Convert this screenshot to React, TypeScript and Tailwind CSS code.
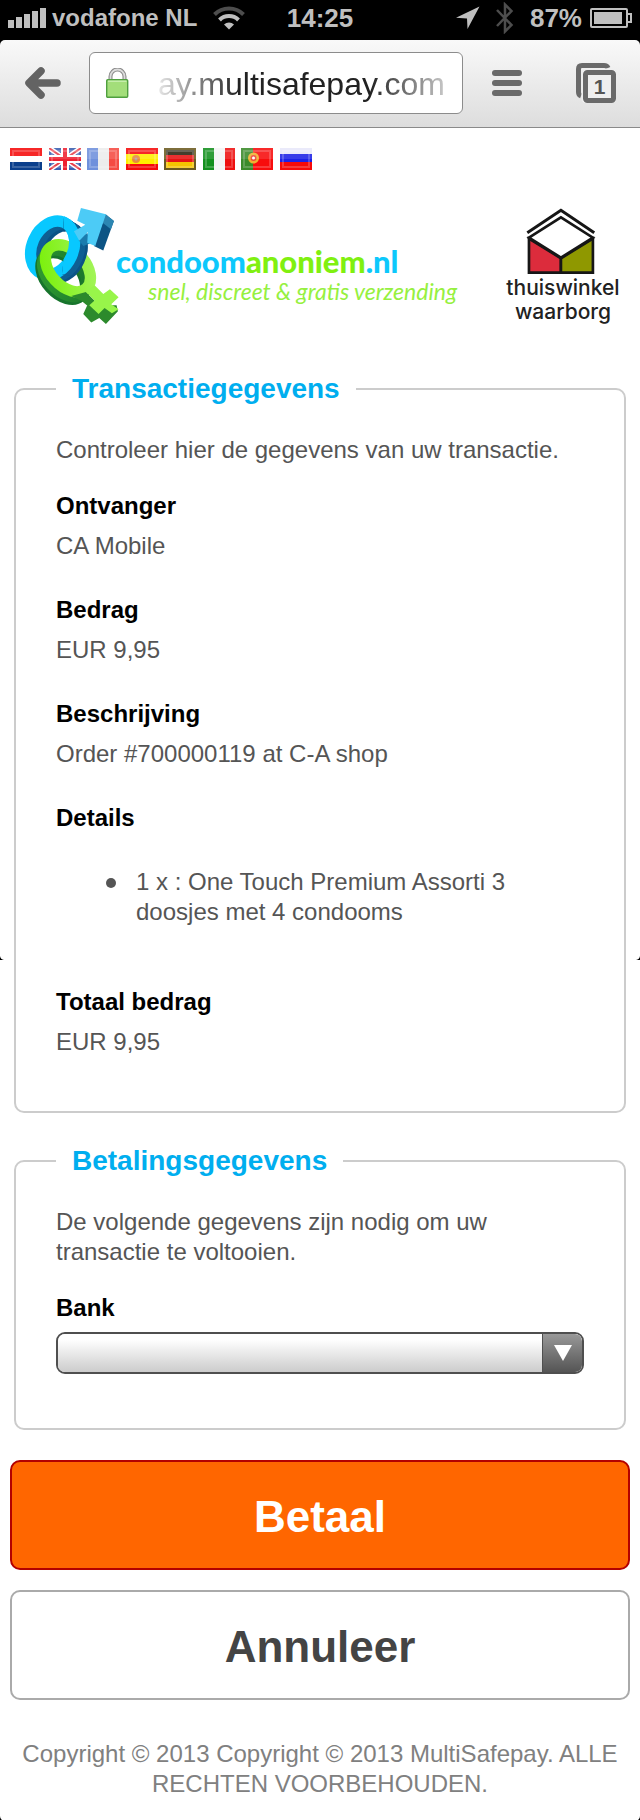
import type { ReactNode } from "react";

const details = [
  { label: "Ontvanger", value: "CA Mobile" },
  { label: "Bedrag", value: "EUR 9,95" },
  { label: "Beschrijving", value: "Order #700000119 at C-A shop" },
];

function SignalIcon() {
  return (
    <svg width="38" height="20" viewBox="0 0 38 20" fill="#bfbfbf" aria-hidden="true">
      <rect x="0" y="12" width="6" height="8" />
      <rect x="8" y="9" width="6" height="11" />
      <rect x="16" y="6" width="6" height="14" />
      <rect x="24" y="3" width="6" height="17" />
      <rect x="32" y="0" width="6" height="20" />
    </svg>
  );
}

function WifiIcon() {
  return (
    <svg width="32" height="24" viewBox="0 0 32 24" fill="none" aria-hidden="true">
      <path d="M1.5 8.5 A20.5 20.5 0 0 1 30.5 8.5" stroke="#4d4d4d" strokeWidth="4" />
      <path d="M6.5 14 A13.5 13.5 0 0 1 25.5 14" stroke="#bfbfbf" strokeWidth="4" />
      <path d="M16 23.5 L11 18.500 A7.500 7.500 0 0 1 21 18.500 Z" fill="#bfbfbf" />
    </svg>
  );
}

function StatusBar() {
  return (
    <div className="grid h-10 grid-cols-[1fr_auto_1fr] items-center bg-black px-2 pb-1 text-[26px] leading-8 font-bold text-[#bfbfbf]">
      <div className="flex items-center gap-[6px]">
        <SignalIcon />
        <span className="text-2xl whitespace-nowrap">vodafone NL</span>
        <span className="pl-[10px]">
          <WifiIcon />
        </span>
      </div>
      <span>14:25</span>
      <div className="flex items-center justify-end gap-2">
        <svg width="24" height="24" viewBox="0 0 24 24" fill="#bfbfbf" className="mr-2" aria-hidden="true">
          <path d="M23.5 0.5 L11.5 23 L11 12.500 L0 11.800 Z" />
        </svg>
        <svg width="18" height="32" viewBox="0 0 18 32" fill="none" stroke="#4d4d4d" strokeWidth="2.500" className="mr-2" aria-hidden="true">
          <path d="M1 8 L15.5 23 L9 29.500 V2.500 L15.500 9 L1 24" />
        </svg>
        <span>87%</span>
        <svg width="42" height="20" viewBox="0 0 42 20" fill="none" aria-hidden="true">
          <rect x="1" y="1" width="36" height="18" rx="1" stroke="#bfbfbf" strokeWidth="2" />
          <rect x="4" y="4" width="28" height="12" fill="#bfbfbf" />
          <path d="M38 6 H41 V14 H38" stroke="#bfbfbf" strokeWidth="2" />
        </svg>
      </div>
    </div>
  );
}

function BrowserBar() {
  return (
    <div className="flex h-[88px] items-center rounded-t-[5px] border-b border-[#8a8a8a] bg-linear-to-b from-[#f9f9f9] to-[#dddddd] px-6 pb-[2px]">
      <button type="button" aria-label="Terug" className="shrink-0">
        <svg width="38" height="34" viewBox="0 0 38 34" fill="none" stroke="#636363" strokeWidth="7.500" strokeLinecap="round" strokeLinejoin="round">
          <path d="M17 5 L5 17 L17 29 M6 17 H33" />
        </svg>
      </button>
      <div className="ml-[27px] flex h-[62px] flex-1 items-center rounded-md border border-[#8c8c8c] bg-white pr-3 pl-4">
        <svg width="24" height="30" viewBox="0 0 24 30" fill="none" className="shrink-0" aria-hidden="true">
          <path d="M4.500 12 V8.500 A7 7 0 0 1 18.500 8.500 V12" stroke="#8a8a8a" strokeWidth="4" />
          <path d="M4.500 12 V8.500 A7 7 0 0 1 18.500 8.500 V12" stroke="#dcdcdc" strokeWidth="1.800" />
          <rect x="0.700" y="11.700" width="21" height="17.500" rx="1" fill="#a3de7a" stroke="#4f9f3f" strokeWidth="1.400" />
          <path d="M2 13.200 H20.500" stroke="#c9f0b0" strokeWidth="1.400" />
        </svg>
        <input
          aria-label="Adres"
          readOnly
          value="ay.multisafepay.com"
          className="ml-7 h-12 w-full min-w-0 flex-1 bg-transparent pt-1 text-[32px] text-[#222222] outline-none [mask-image:linear-gradient(to_right,transparent_-10px,black_80px,black_calc(100%-80px),transparent_calc(100%+20px))]"
        />
      </div>
      <button type="button" aria-label="Menu" className="ml-[29px] shrink-0">
        <svg width="30" height="26" viewBox="0 0 30 26" fill="#6a6a6a">
          <rect x="0" y="0" width="30" height="6" rx="3" />
          <rect x="0" y="10" width="30" height="6" rx="3" />
          <rect x="0" y="20" width="30" height="6" rx="3" />
        </svg>
      </button>
      <button type="button" aria-label="Tabbladen" className="ml-[54px] shrink-0">
        <svg width="40" height="40" viewBox="0 0 40 40" fill="none">
          <path d="M5 33 Q2.500 32 2.500 29 V6 Q2.500 2.500 6 2.500 H28 Q31 2.500 32 5" stroke="#6a6a6a" strokeWidth="5" />
          <rect x="5.500" y="5.500" width="34.500" height="34.500" rx="4" fill="#efefef" />
          <rect x="9.500" y="9.500" width="28" height="28" rx="2" stroke="#6a6a6a" strokeWidth="5" />
          <text x="23.500" y="31" textAnchor="middle" fontSize="21" fontWeight="700" fill="#555555" fontFamily="Liberation Sans, sans-serif">
            1
          </text>
        </svg>
      </button>
    </div>
  );
}

function Flag({ name, children }: { name: string; children: ReactNode }) {
  return (
    <a href="#taal" aria-label={name} className="block">
      <svg width="32" height="22" viewBox="0 0 32 22" className="block">
        {children}
        <rect x="3" y="3" width="26" height="16" fill="none" stroke="#ffffff" strokeOpacity="0.200" strokeWidth="2" />
        <rect x="0" y="0" width="32" height="11" fill="#ffffff" fillOpacity="0.120" />
      </svg>
    </a>
  );
}

function Languages() {
  return (
    <nav aria-label="Talen" className="flex w-[302px] justify-between">
      <Flag name="Nederlands">
        <rect width="32" height="8" fill="#f50a0a" />
        <rect y="8" width="32" height="6" fill="#ffffff" />
        <rect y="14" width="32" height="8" fill="#0b3f8c" />
      </Flag>
      <Flag name="English">
        <rect width="32" height="22" fill="#3a5fb0" />
        <path d="M0 0 L32 22 M32 0 L0 22" stroke="#ffffff" strokeWidth="5" />
        <path d="M0 0 L32 22 M32 0 L0 22" stroke="#e8404a" strokeWidth="2" />
        <path d="M16 0 V22 M0 11 H32" stroke="#ffffff" strokeWidth="8" />
        <path d="M16 0 V22 M0 11 H32" stroke="#ee2030" strokeWidth="4" />
      </Flag>
      <Flag name="Français">
        <rect width="11" height="22" fill="#6f90dc" />
        <rect x="11" width="11" height="22" fill="#ececec" />
        <rect x="22" width="10" height="22" fill="#f54a42" />
      </Flag>
      <Flag name="Español">
        <rect width="32" height="22" fill="#f50a0a" />
        <rect y="6" width="32" height="10" fill="#ffee00" />
        <circle cx="10" cy="11" r="4" fill="#e88a3c" />
        <circle cx="10" cy="11" r="1.500" fill="#b9a0a0" />
      </Flag>
      <Flag name="Deutsch">
        <rect width="32" height="8" fill="#2a2410" />
        <rect y="7" width="32" height="8" fill="#e51414" />
        <rect y="14" width="32" height="8" fill="#f5c400" />
        <rect x="1" y="1" width="30" height="20" fill="none" stroke="#6b5a20" strokeWidth="2" />
      </Flag>
      <Flag name="Italiano">
        <rect width="11" height="22" fill="#14901e" />
        <rect x="11" width="11" height="22" fill="#f4f4f4" />
        <rect x="22" width="10" height="22" fill="#ee1010" />
      </Flag>
      <Flag name="Português">
        <rect width="13" height="22" fill="#3a8a2a" />
        <rect x="12" width="20" height="22" fill="#f80c0c" />
        <circle cx="12.500" cy="10" r="5.500" fill="#f0b030" />
        <circle cx="12.500" cy="10" r="3" fill="#ee4438" />
        <circle cx="12.500" cy="10" r="1.500" fill="#ffffff" />
      </Flag>
      <Flag name="Русский">
        <rect width="32" height="7" fill="#e8e8fa" />
        <rect y="6" width="32" height="9" fill="#1c22e6" />
        <rect y="14" width="32" height="8" fill="#f50a0a" />
      </Flag>
    </nav>
  );
}

function ShopLogo() {
  return (
    <svg width="448" height="116" viewBox="0 0 448 116" role="img" aria-label="condoomanoniem.nl">
      <defs>
        <linearGradient id="face-green" x1="0" y1="0" x2="1" y2="1">
          <stop offset="0" stopColor="#7af00a" />
          <stop offset="1" stopColor="#a4f55c" />
        </linearGradient>
        <linearGradient id="side-green" x1="0" y1="0" x2="1" y2="1">
          <stop offset="0" stopColor="#2f9a30" />
          <stop offset="1" stopColor="#17702c" />
        </linearGradient>
        <clipPath id="over">
          <path d="M192 60 H300 V205 L236 262 L186 252 L190 215 Z" />
        </clipPath>
      </defs>
      <g transform="scale(0.333) translate(-72 -54)" fill="none">
        <g strokeWidth="30">
          <ellipse cx="184" cy="188" rx="60" ry="82" transform="rotate(24 184 188)" stroke="#0b5386" />
          <ellipse cx="176" cy="183" rx="61" ry="83" transform="rotate(24 176 183)" stroke="#0f5f93" />
          <ellipse cx="168" cy="179" rx="61" ry="83" transform="rotate(24 168 179)" stroke="#0f5f93" />
          <ellipse cx="158" cy="174" rx="62" ry="84" transform="rotate(24 158 174)" stroke="#08c8ff" strokeWidth="34" />
        </g>
        <g strokeWidth="30">
          <ellipse cx="188" cy="260" rx="52" ry="82" transform="rotate(-42 188 260)" stroke="#17742c" />
          <ellipse cx="193" cy="252" rx="52" ry="82" transform="rotate(-42 193 252)" stroke="url(#side-green)" />
          <ellipse cx="198" cy="244" rx="52" ry="82" transform="rotate(-42 198 244)" stroke="url(#side-green)" />
          <ellipse cx="204" cy="235" rx="53" ry="82" transform="rotate(-42 204 235)" stroke="url(#face-green)" strokeWidth="34" />
        </g>
        <g clipPath="url(#over)" strokeWidth="30">
          <ellipse cx="184" cy="188" rx="60" ry="82" transform="rotate(24 184 188)" stroke="#0b5386" />
          <ellipse cx="176" cy="183" rx="61" ry="83" transform="rotate(24 176 183)" stroke="#0f5f93" />
          <ellipse cx="168" cy="179" rx="61" ry="83" transform="rotate(24 168 179)" stroke="#0f5f93" />
          <ellipse cx="158" cy="174" rx="62" ry="84" transform="rotate(24 158 174)" stroke="#08c8ff" strokeWidth="34" />
        </g>
        <path d="M236 150 L262 128 L272 160 L250 168 Z" fill="#1a7cae" />
        <path d="M317 73 L342 93 L310 182 L282 168 Z" fill="#0c5484" />
        <path d="M317 73 L342 93 L333 118 L308 98 Z" fill="#2c86b2" />
        <path d="M243 54 L318 73 L286 168 L262 158 L264 126 L238 152 L222 124 L256 104 L232 92 Z" fill="#4ccbf6" />
        <path d="M262 346 L250 372 L274 398 L298 384 L318 402 L354 364 L350 346 Z" fill="#2c8a2c" />
        <path d="M214 318 L258 306 L286 334 L268 352 L246 334 Z" fill="#2c8a2c" />
        <path d="M256 304 L284 286 L310 312 L330 298 L356 322 L334 343 L356 358 L336 370 L314 354 L296 372 L268 346 L284 332 Z" fill="#98f54a" />
      </g>
      <text x="92" y="65" fontFamily="Lato, sans-serif" fontWeight="900" fontSize="31" fill="#0cc8fc">
        condoom<tspan fill="#80f010">anoniem</tspan>.nl
      </text>
      <text x="124" y="92" fontFamily="Lato, sans-serif" fontStyle="italic" fontSize="23" fill="#96f040">
        snel, discreet &amp; gratis verzending
      </text>
    </svg>
  );
}

function TrustLogo() {
  return (
    <svg width="118" height="118" viewBox="0 0 118 118" role="img" aria-label="thuiswinkel waarborg">
      <g transform="scale(0.333) translate(-552 -54)" fill="none" stroke="#161616" strokeWidth="8">
        <path d="M627 146 L723 205 V248 H627 Z" fill="#dc2c3c" />
        <path d="M819 146 L723 205 V248 H819 Z" fill="#8f9800" />
        <path d="M627 143 L723 82 L819 143 L723 203 Z" fill="#ffffff" />
        <path d="M622 128 L723 61 L823 128" strokeWidth="9" />
      </g>
      <g fontFamily="Inter, sans-serif" fontWeight="500" fontSize="21" fill="#222222" textAnchor="middle">
        <text x="59" y="87">thuiswinkel</text>
        <text x="59" y="111">waarborg</text>
      </g>
    </svg>
  );
}

function Panel({ title, children }: { title: string; children: ReactNode }) {
  return (
    <fieldset className="mx-[14px] min-w-0 rounded-[10px] border-2 border-[#cccccc] px-10">
      <legend className="px-4 text-[28px] leading-8 font-bold text-[#00aeef]">{title}</legend>
      {children}
    </fieldset>
  );
}

function Field({ label, children }: { label: string; children: ReactNode }) {
  return (
    <div>
      <dt className="font-bold text-black">{label}</dt>
      <dd className="mt-[10px]">{children}</dd>
    </div>
  );
}

function SeamCorners() {
  return (
    <div className="pointer-events-none absolute inset-x-0 top-[956px] flex justify-between" aria-hidden="true">
      <svg width="4" height="4" viewBox="0 0 4 4">
        <path d="M0 0 Q0.500 3.500 4 4 H0 Z" />
      </svg>
      <svg width="4" height="4" viewBox="0 0 4 4">
        <path d="M4 0 Q3.500 3.500 0 4 H4 Z" />
      </svg>
    </div>
  );
}

export default function App() {
  return (
    <div className="relative bg-black font-['Liberation_Sans',Arial,sans-serif] text-2xl leading-[30px] text-[#555555]">
      <StatusBar />
      <BrowserBar />
      <main className="rounded-b-[5px] bg-white pt-5 pb-[22px]">
        <div className="px-[10px]">
          <Languages />
        </div>
        <header className="mt-[38px] flex justify-between pr-[18px] pl-6">
          <ShopLogo />
          <TrustLogo />
        </header>

        <form className="mt-[47px]" onSubmit={(event) => event.preventDefault()}>
          <Panel title="Transactiegegevens">
            <p className="mt-[30px]">Controleer hier de gegevens van uw transactie.</p>
            <dl className="mt-[26px] mb-[54px] flex flex-col gap-[34px]">
              {details.map((item) => (
                <Field key={item.label} label={item.label}>
                  {item.value}
                </Field>
              ))}
              <div>
                <dt className="font-bold text-black">Details</dt>
                <dd className="mt-[34px] mb-[26px]">
                  <ul className="pr-10 pl-[50px]">
                    <li className="flex gap-5">
                      <span className="mt-[11px] size-[10px] shrink-0 rounded-full bg-[#555555]" aria-hidden="true" />
                      1 x : One Touch Premium Assorti 3 doosjes met 4 condooms
                    </li>
                  </ul>
                </dd>
              </div>
              <Field label="Totaal bedrag">EUR 9,95</Field>
            </dl>
          </Panel>

          <div className="mt-8">
            <Panel title="Betalingsgegevens">
              <p className="mt-[30px]">De volgende gegevens zijn nodig om uw transactie te voltooien.</p>
              <label htmlFor="bank" className="mt-[26px] block font-bold text-black">
                Bank
              </label>
              <div className="relative mt-[9px] mb-[54px] flex h-[42px] overflow-hidden rounded-[9px] border-2 border-[#4f4f4f]">
                <select id="bank" className="w-full appearance-none bg-linear-to-b from-white from-15% to-[#cccccc] px-3 outline-none">
                  <option value=""></option>
                </select>
                <span className="pointer-events-none absolute inset-y-0 right-0 flex w-10 items-center justify-center border-l border-[#4f4f4f] bg-linear-to-b from-[#999999] to-[#555555]">
                  <svg width="18" height="16" viewBox="0 0 18 16" aria-hidden="true">
                    <path d="M0 0 H18 L9 16 Z" fill="#ffffff" />
                  </svg>
                </span>
              </div>
            </Panel>
          </div>

          <div className="mt-[30px] flex flex-col gap-5 px-[10px] text-[44px] leading-[50px] font-bold">
            <button type="submit" className="rounded-[10px] border-2 border-[#b30000] bg-[#ff6600] pt-[30px] pb-[26px] text-white">
              Betaal
            </button>
            <button type="button" className="rounded-[10px] border-2 border-[#aaaaaa] bg-white pt-[30px] pb-[26px] text-[#444444]">
              Annuleer
            </button>
          </div>
        </form>

        <footer className="mt-[39px] px-4 text-center text-[#808080]">
          Copyright © 2013 Copyright © 2013 MultiSafepay. ALLE RECHTEN VOORBEHOUDEN.
        </footer>
      </main>
      <SeamCorners />
    </div>
  );
}
